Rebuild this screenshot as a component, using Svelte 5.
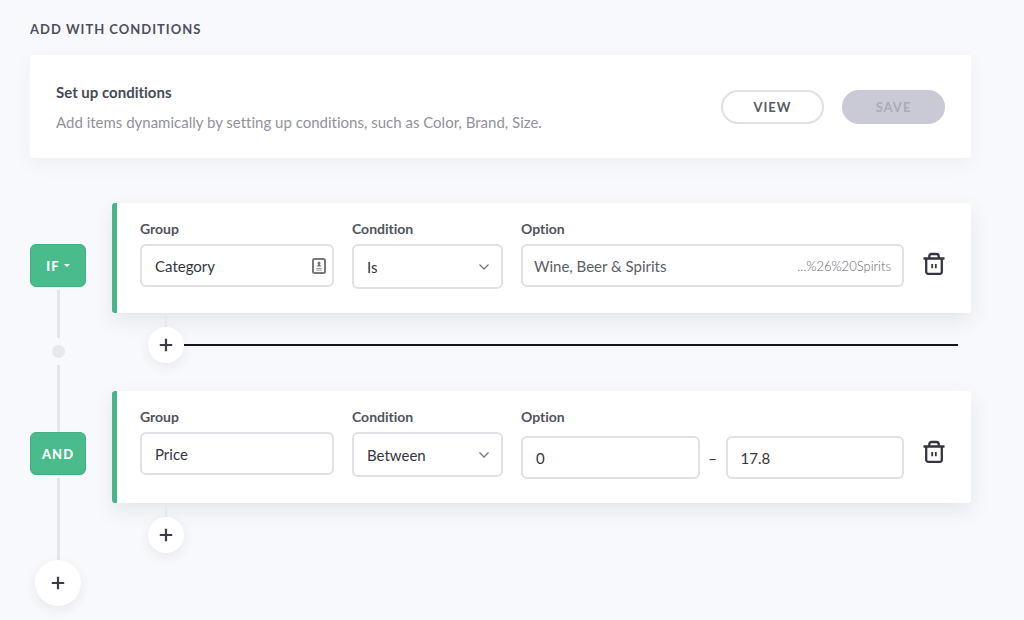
<script>
  let group1 = $state('Category');
  let condition1 = $state('Is');
  let option1 = $state('Wine, Beer & Spirits');
  let group2 = $state('Price');
  let condition2 = $state('Between');
  let from = $state('0');
  let to = $state('17.8');
  const conditions = ['Is', 'Is not', 'Between'];
</script>

{#snippet plus()}
  <svg class="plus" viewBox="0 0 14 14" aria-hidden="true">
    <path d="M7 .8v12.400M.8 7h12.400" />
  </svg>
{/snippet}

{#snippet chevron()}
  <svg class="chevron" viewBox="0 0 12 8" aria-hidden="true">
    <path d="M1.500 1.500 6 6l4.500-4.500" />
  </svg>
{/snippet}

{#snippet trash()}
  <svg class="trash" viewBox="0 0 22 24" aria-hidden="true">
    <path d="M.5 6.500h21M6.300 6.300V4.200a2.200 2.200 0 0 1 2.200-2.200h5a2.200 2.200 0 0 1 2.200 2.200v2.100M3.200 6.500v13.300a2 2 0 0 0 2 2h11.600a2 2 0 0 0 2-2V6.500" />
    <path class="slots" d="M9.200 12v4.200M12.800 12v4.200" />
  </svg>
{/snippet}

<main>
  <h1>Add with conditions</h1>

  <section class="intro">
    <div class="copy">
      <h2>Set up conditions</h2>
      <p>Add items dynamically by setting up conditions, such as Color, Brand, Size.</p>
    </div>
    <button class="pill" type="button">View</button>
    <button class="pill save" type="button" disabled>Save</button>
  </section>

  <section class="rule">
    <div class="rail">
      <div class="lead"></div>
      <button class="badge" type="button">IF <i class="caret"></i></button>
      <div class="line after"></div>
      <div class="dot"></div>
      <div class="line tail"></div>
    </div>
    <div class="body">
      <div class="card">
        <div class="field">
          <label for="group-1">Group</label>
          <div class="box">
            <input id="group-1" bind:value={group1} />
            <svg class="contact" viewBox="0 0 14 16" aria-hidden="true">
              <rect x="1" y="1" width="12" height="14" rx="1.500" />
              <path class="solid" d="M7 3.500a1.500 1.500 0 0 1 1.500 1.500c0 .8-.4 1.300-.7 1.600L9.500 8.500h-5l1.700-1.900c-.3-.3-.7-.8-.7-1.600A1.500 1.500 0 0 1 7 3.500zM4.300 10h5.400v.8H4.300zM4.300 11.700h5.400v.8H4.300z" />
            </svg>
          </div>
        </div>
        <div class="field">
          <label for="condition-1">Condition</label>
          <div class="box choice">
            <select id="condition-1" bind:value={condition1}>
              {#each conditions as c}<option>{c}</option>{/each}
            </select>
            {@render chevron()}
          </div>
        </div>
        <div class="field">
          <label for="option-1">Option</label>
          <div class="box wide">
            <input id="option-1" bind:value={option1} />
            <span class="code">...%26%20Spirits</span>
          </div>
        </div>
        <button class="remove" type="button" aria-label="Remove rule">{@render trash()}</button>
      </div>
      <div class="append">
        <div class="stem">
          <button class="round" type="button" aria-label="Add condition">{@render plus()}</button>
        </div>
        <hr />
      </div>
    </div>
  </section>

  <section class="rule">
    <div class="rail">
      <div class="line lead"></div>
      <button class="badge" type="button">AND</button>
      <div class="line after last"></div>
    </div>
    <div class="body">
      <div class="card">
        <div class="field">
          <label for="group-2">Group</label>
          <div class="box"><input id="group-2" bind:value={group2} /></div>
        </div>
        <div class="field">
          <label for="condition-2">Condition</label>
          <div class="box choice">
            <select id="condition-2" bind:value={condition2}>
              {#each conditions as c}<option>{c}</option>{/each}
            </select>
            {@render chevron()}
          </div>
        </div>
        <div class="field">
          <label for="from">Option</label>
          <div class="range">
            <div class="box"><input id="from" bind:value={from} /></div>
            <span>–</span>
            <div class="box"><input aria-label="Option maximum" bind:value={to} /></div>
          </div>
        </div>
        <button class="remove" type="button" aria-label="Remove rule">{@render trash()}</button>
      </div>
      <div class="append end">
        <div class="stem">
          <button class="round" type="button" aria-label="Add condition">{@render plus()}</button>
        </div>
      </div>
    </div>
  </section>

  <div class="finish">
    <button class="round large" type="button" aria-label="Add rule">{@render plus()}</button>
  </div>
</main>

<style>
  :global(body) {
    margin: 0;
    background: #f8f9fc;
  }
  main {
    box-sizing: border-box;
    padding: 20px 53px 14px 30px;
    font-family: Lato, sans-serif;
    font-size: 15px;
    line-height: 18px;
    font-variant-ligatures: none;
    color: #33353f;
  }
  button, input, select {
    font: inherit;
    font-variant-ligatures: none;
    color: inherit;
    margin: 0;
    padding: 0;
    border: 0;
    background: none;
  }
  button {
    cursor: pointer;
  }
  h1 {
    margin: 0 0 17px;
    font-size: 13px;
    font-weight: 700;
    letter-spacing: 1px;
    text-transform: uppercase;
    color: #4d4f5a;
  }
  .intro {
    display: flex;
    align-items: center;
    gap: 18px;
    padding: 28px 26px 27px;
    margin-bottom: 45px;
    background: #fff;
    border-radius: 3px;
    box-shadow: 0 6px 20px rgba(40, 50, 80, 0.05);
  }
  .copy {
    flex: 1;
  }
  h2 {
    margin: 0 0 12px;
    font-size: 15px;
    font-weight: 700;
    color: #454b57;
  }
  p {
    margin: 0;
    color: #90929a;
  }
  .pill {
    box-sizing: border-box;
    width: 103px;
    height: 34px;
    border: 2px solid #e0e0e5;
    border-radius: 17px;
    font-size: 13px;
    font-weight: 700;
    letter-spacing: 1px;
    text-transform: uppercase;
    color: #555a64;
  }
  .save {
    background: #c9cad5;
    border-color: #c9cad5;
    color: #a9abb7;
  }
  .rule {
    display: flex;
    gap: 26px;
  }
  .rail {
    width: 56px;
    display: flex;
    flex-direction: column;
    align-items: center;
  }
  .lead {
    height: 41px;
  }
  .line {
    width: 3px;
    background: #e3e6ea;
  }
  .after {
    flex: 1;
    margin: 3px 0 7px;
  }
  .last {
    margin-bottom: 0;
  }
  .dot {
    width: 13px;
    height: 13px;
    border-radius: 50%;
    background: #e6e8ec;
    margin-bottom: 7px;
  }
  .tail {
    height: 26px;
  }
  .badge {
    display: flex;
    align-items: center;
    justify-content: center;
    gap: 4px;
    box-sizing: border-box;
    width: 56px;
    height: 43px;
    border: 1px solid #45ad82;
    border-radius: 6px;
    background: #4abb8b;
    color: #fff;
    font-size: 13px;
    font-weight: 900;
    letter-spacing: 1px;
  }
  .caret {
    border: 3px solid transparent;
    border-top-color: #fff;
    border-bottom: 0;
  }
  .body {
    flex: 1;
    min-width: 0;
  }
  .card {
    display: grid;
    grid-template-columns: 194fr 151fr 383fr 23px;
    gap: 18px;
    align-items: start;
    padding: 17px 26px 24px 23px;
    border-left: 5px solid #4ab58a;
    border-radius: 3px;
    background: #fff;
    box-shadow: 0 8px 20px rgba(40, 70, 90, 0.1);
  }
  .field {
    display: flex;
    flex-direction: column;
    gap: 6px;
    min-width: 0;
  }
  label {
    font-size: 14px;
    font-weight: 700;
    color: #50535e;
  }
  .box {
    position: relative;
    display: flex;
    align-items: center;
    box-sizing: border-box;
    height: 43px;
    padding: 0 13px;
    border: 2px solid #e0e1e4;
    border-radius: 6px;
    min-width: 0;
  }
  .choice {
    height: 45px;
  }
  .wide {
    padding: 0 11px;
    color: #5b5d66;
  }
  input, select {
    flex: 1;
    min-width: 0;
    width: 100%;
    height: 100%;
    outline: 0;
    appearance: none;
  }
  .code {
    font-size: 13px;
    font-weight: 300;
    color: #666872;
  }
  .contact {
    width: 14px;
    height: 16px;
    margin-right: -7px;
    fill: none;
    stroke: #77787c;
    stroke-width: 2;
  }
  .solid {
    fill: #77787c;
    stroke: none;
  }
  .chevron {
    position: absolute;
    right: 11px;
    width: 12px;
    height: 8px;
    fill: none;
    stroke: #74767e;
    stroke-width: 1.300;
    pointer-events: none;
  }
  .range {
    display: grid;
    grid-template-columns: 1fr 26px 1fr;
    align-items: center;
    text-align: center;
    margin-top: 4px;
  }
  .remove {
    justify-self: end;
    margin-top: 32px;
  }
  .trash {
    display: block;
    width: 22px;
    height: 24px;
    fill: none;
    stroke: #343542;
    stroke-width: 2.300;
  }
  .slots {
    stroke-width: 1.800;
  }
  .append {
    display: flex;
    align-items: flex-end;
    padding: 0 13px 28px 36px;
  }
  .end {
    padding-bottom: 7px;
  }
  .stem {
    padding-top: 14px;
    background: linear-gradient(#e6eaee, #e6eaee) center top / 2px 14px no-repeat;
  }
  .round {
    display: flex;
    align-items: center;
    justify-content: center;
    width: 36px;
    height: 36px;
    border-radius: 50%;
    background: #fff;
    box-shadow: 0 4px 12px rgba(40, 50, 80, 0.08);
  }
  .large {
    width: 46px;
    height: 46px;
  }
  .plus {
    width: 14px;
    height: 14px;
    stroke: #3a3c49;
    stroke-width: 2.200;
  }
  hr {
    flex: 1;
    height: 2px;
    margin: 0 0 17px;
    border: 0;
    background: #15151b;
  }
  .finish {
    width: 56px;
    display: flex;
    justify-content: center;
  }
</style>
